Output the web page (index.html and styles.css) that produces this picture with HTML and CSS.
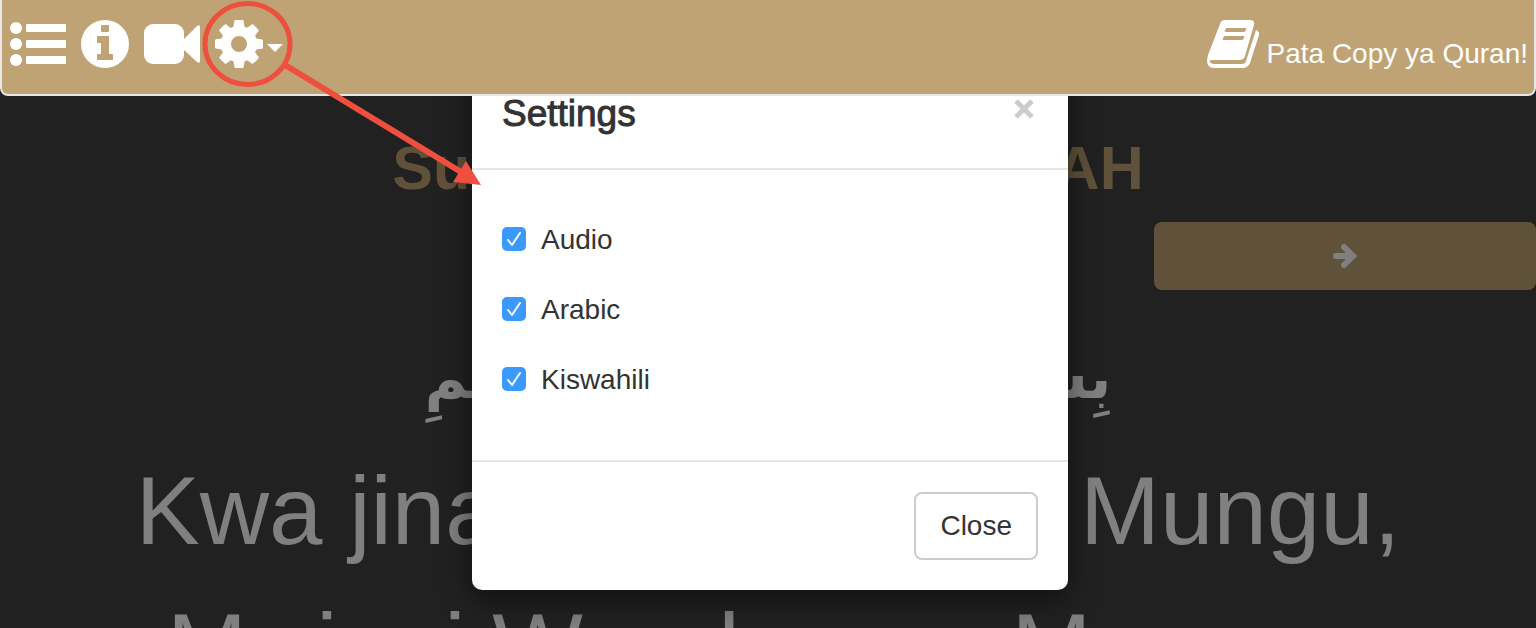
FILE: index.html
```html
<!DOCTYPE html>
<html lang="sw">
<head>
<meta charset="utf-8">
<meta name="viewport" content="width=device-width, initial-scale=1">
<title>Quran Kiswahili</title>
<link rel="stylesheet" href="styles.css">
</head>
<body>
<nav class="navbar">
  <div class="nav-tools">
    <button class="tool" type="button" aria-label="Orodha">
      <svg width="56" height="44" viewBox="0 0 56 44"><circle cx="6" cy="6" r="6"/><circle cx="6" cy="22" r="6"/><circle cx="6" cy="38" r="6"/><rect x="16" y="2" width="40" height="8" rx="1"/><rect x="16" y="18" width="40" height="8" rx="1"/><rect x="16" y="34" width="40" height="8" rx="1"/></svg>
    </button>
    <button class="tool" type="button" aria-label="Habari">
      <svg width="48" height="48" viewBox="0 0 48 48"><path fill-rule="evenodd" d="M24 0a24 24 0 1 1 0 48a24 24 0 1 1 0-48zM21 5a1 1 0 0 0-1 1v5a1 1 0 0 0 1 1h6a1 1 0 0 0 1-1V6a1 1 0 0 0-1-1zM17 16a1 1 0 0 0-1 1v5a1 1 0 0 0 1 1h3v11h-3a1 1 0 0 0-1 1v4a1 1 0 0 0 1 1h14a1 1 0 0 0 1-1v-4a1 1 0 0 0-1-1h-3V17a1 1 0 0 0-1-1z"/></svg>
    </button>
    <button class="tool" type="button" aria-label="Video">
      <svg width="56" height="40" viewBox="0 0 56 40"><path d="M9 0h22a9 9 0 0 1 9 9v6L53 2q3-2 3 1v34q0 3-3 1L40 26v5a9 9 0 0 1-9 9H9a9 9 0 0 1-9-9V9a9 9 0 0 1 9-9z"/></svg>
    </button>
    <button class="tool" type="button" aria-label="Settings">
      <svg width="48" height="48" viewBox="0 0 1536 1536"><path d="M1024 768q0-106-75-181t-181-75-181 75-75 181 75 181 181 75 181-75 75-181zm512-109v222q0 12-8 23t-20 13l-185 28q-19 54-39 91 35 50 107 138 10 12 10 25t-9 23q-27 37-99 108t-94 71q-12 0-26-9l-138-108q-44 23-91 38-16 136-29 186-7 28-36 28H657q-14 0-24.500-8.500T621 1506l-28-184q-49-16-90-37l-141 107q-10 9-25 9-14 0-25-11-126-114-165-168-7-10-7-23 0-12 8-23 15-21 51-66.500t54-70.500q-27-50-41-99L29 913q-13-2-21-12.500T0 877V655q0-12 8-23t19-13l186-28q14-46 39-92-40-57-107-138-10-12-10-24 0-10 9-23 26-36 98.500-107.500T337 135q13 0 26 10l138 107q44-23 91-38 16-136 29-186 7-28 36-28h222q14 0 24.500 8.500T915 30l28 184q49 16 90 37l142-107q9-9 24-9 13 0 25 10 129 119 165 170 7 8 7 22 0 12-8 23-15 21-51 66.500t-54 70.500q26 50 41 98l183 28q13 2 21 12.500t8 23.500z"/></svg>
      <svg class="caret" width="16" height="8" viewBox="0 0 16 8"><path d="M0 0h16L8 8z"/></svg>
    </button>
  </div>
  <a class="copy-link" href="#copy">
    <svg width="52" height="48" viewBox="0 0 52 48"><path fill-rule="evenodd" d="M18 0h25q5 0 4 5l-9 31q-1 4-6 4H6q-4 0-3 2 1 2 4 2h28q3 0 4-3l10-31q4 2 3 5l-9 28q-2 5-8 5H7q-7 0-7-8l1-5L13 4Q14 0 18 0zM20 8h18q2 0 1 2t-2 2H19q-2 0-1-2t2-2zM18 16h18q2 0 1 2t-2 2H17q-2 0-1-2t2-2z"/></svg>
    <span>Pata Copy ya Quran!</span>
  </a>
</nav>

<main class="page">
  <h1 class="surah-title">Surat ya kwanza FATIHAH</h1>
  <div class="pager">
    <button class="next" type="button" aria-label="Sura inayofuata">
      <svg width="24" height="24" viewBox="0 0 24 24"><path d="M3 12h17M11 3l9 9l-9 9" fill="none" stroke="currentColor" stroke-width="6" stroke-linecap="round" stroke-linejoin="miter"/></svg>
    </button>
  </div>
  <p class="arabic" lang="ar" dir="rtl">بِسمِ اللهِ الرَّحمٰنِ الرَّحيمِ</p>
  <p class="verse">Kwa jina la Mwenyezi Mungu,<br>Mwingi Warehema, Mwenye</p>
</main>

<div class="modal" role="dialog" aria-labelledby="settings-title">
  <header class="modal-header">
    <h2 class="modal-title" id="settings-title">Settings</h2>
    <button class="dismiss" type="button" aria-label="Close dialog">
      <svg width="20" height="20" viewBox="0 0 20 20"><path d="M2 2l16 16M18 2L2 18" fill="none" stroke="currentColor" stroke-width="5"/></svg>
    </button>
  </header>
  <div class="modal-body">
    <label class="option"><input type="checkbox" checked><span>Audio</span></label>
    <label class="option"><input type="checkbox" checked><span>Arabic</span></label>
    <label class="option"><input type="checkbox" checked><span>Kiswahili</span></label>
  </div>
  <footer class="modal-footer">
    <button class="close" type="button">Close</button>
  </footer>
</div>

<svg class="callout" width="482" height="190" viewBox="0 0 482 190" aria-hidden="true">
  <ellipse cx="247.500" cy="44" rx="42.500" ry="40.500" fill="none" stroke="#ee4f3e" stroke-width="5"/>
  <path d="M285 65L466 175" stroke="#ee4f3e" stroke-width="6"/>
  <path d="M481 185L466 161L453 182z" fill="#ee4f3e"/>
</svg>
</body>
</html>
```

FILE: styles.css
```css
* {
  box-sizing: border-box;
}

body {
  display: flex;
  flex-direction: column;
  height: 100vh;
  margin: 0;
  overflow: hidden;
  background: #212121;
  color: #333;
  font-family: "Liberation Sans", Arial, sans-serif;
  font-size: 28px;
  line-height: 40px;
}

button {
  margin: 0;
  padding: 0;
  border: 0;
  background: none;
  color: inherit;
  font: inherit;
  cursor: pointer;
}

svg {
  display: block;
}

.navbar {
  position: relative;
  z-index: 3;
  display: flex;
  flex: none;
  justify-content: space-between;
  height: 96px;
  padding: 0 6px 0 8px;
  border: 2px solid #e7e7e7;
  border-top: 0;
  border-radius: 0 0 8px 8px;
  background: #c0a375;
  color: #fff;
}

.nav-tools {
  display: flex;
  align-items: center;
  gap: 15px;
  height: 88px;
}

.tool {
  display: flex;
  align-items: center;
  gap: 4px;
  fill: currentColor;
}

.caret {
  margin-top: 8px;
}

.copy-link {
  display: flex;
  align-items: flex-start;
  gap: 8px;
  padding-top: 20px;
  color: inherit;
  text-decoration: none;
  fill: currentColor;
}

.copy-link span {
  padding-top: 14px;
}

.page {
  flex: 1;
  min-height: 0;
  overflow: hidden;
  color: #808080;
  text-align: center;
}

.surah-title {
  margin: 0;
  padding-top: 36px;
  color: #60513a;
  font-size: 61px;
  line-height: 72px;
  white-space: nowrap;
}

.pager {
  display: flex;
  justify-content: flex-end;
  padding-top: 18px;
}

.next {
  display: flex;
  align-items: center;
  justify-content: center;
  width: calc(25% - 2px);
  height: 68px;
  border-radius: 8px;
  background: #60513a;
}

.arabic {
  margin: 28px 0 0;
  font-family: "DejaVu Sans", sans-serif;
  font-size: 58px;
  font-weight: 700;
  line-height: 120px;
  white-space: nowrap;
}

.verse {
  margin: 4px 0 0;
  font-size: 96px;
  line-height: 137px;
  white-space: nowrap;
}

.modal {
  position: absolute;
  z-index: 2;
  top: 60px;
  left: calc(50% + 2px);
  width: 596px;
  border-radius: 10px;
  background: #fff;
  box-shadow: 0 10px 30px rgba(0, 0, 0, 0.5);
  transform: translateX(-50%);
}

.modal-header {
  display: flex;
  align-items: center;
  justify-content: space-between;
  height: 110px;
  padding: 0 34px 0 30px;
  border-bottom: 2px solid #e5e5e5;
}

.modal-title {
  margin: 0;
  font-size: 37px;
  font-weight: 400;
  line-height: 52px;
  -webkit-text-stroke: 1px currentColor;
}

.dismiss {
  padding-bottom: 10px;
  color: #ccc;
}

.modal-body {
  display: flex;
  flex-direction: column;
  gap: 30px;
  padding: 50px 30px 60px;
}

.option {
  display: flex;
  align-items: center;
  gap: 15px;
}

.option input {
  width: 24px;
  height: 24px;
  margin: 0 0 2px;
  border-radius: 5px;
  appearance: none;
  background: #3b99fc url("data:image/svg+xml,%3Csvg xmlns='http://www.w3.org/2000/svg' viewBox='0 0 24 24'%3E%3Cpath d='M6 13l4 5L18 6' fill='none' stroke='white' stroke-width='2' stroke-linecap='round' stroke-linejoin='round'/%3E%3C/svg%3E");
}

.modal-footer {
  display: flex;
  justify-content: flex-end;
  padding: 30px;
  border-top: 2px solid #e5e5e5;
}

.close {
  padding: 12px 24px;
  border: 2px solid #ccc;
  border-radius: 8px;
}

.callout {
  position: absolute;
  z-index: 4;
  top: 0;
  left: 0;
  pointer-events: none;
}
```
